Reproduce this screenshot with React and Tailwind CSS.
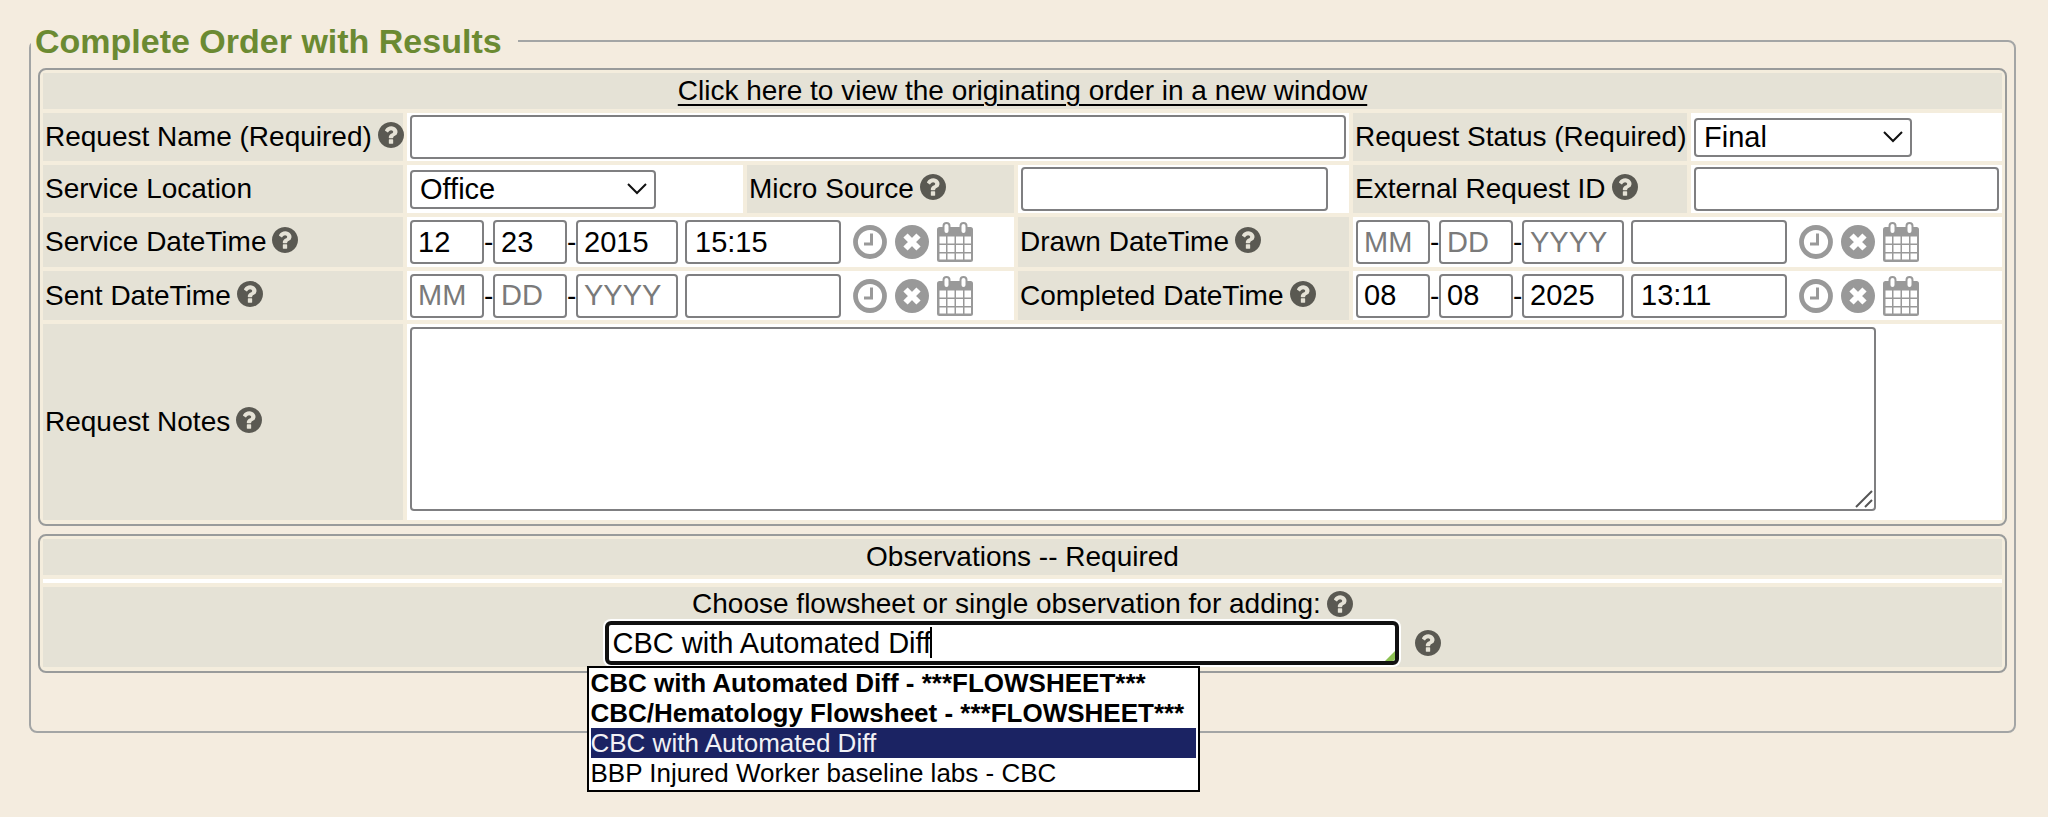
import React from "react";

const BOX =
  "h-[44px] rounded-[4px] border-2 border-[#7f7f81] bg-white text-[29px] leading-[36px] text-black outline-none placeholder:text-[#7a7a7a]";
const INPUT = `${BOX} px-1.5`;

function Help({ about, className = "" }) {
  return (
    <button type="button" aria-label={`Help: ${about}`} className={`inline-flex shrink-0 ${className}`}>
      <svg viewBox="0 0 1536 1536" className="size-[26px]" fill="#5a5952" aria-hidden="true">
        <path d="M896 1248v-192q0-14-9-23t-23-9H672q-14 0-23 9t-9 23v192q0 14 9 23t23 9h192q14 0 23-9t9-23zm256-672q0-88-55.500-163T958 297t-170-41q-243 0-371 213-15 24 8 42l132 100q7 6 19 6 16 0 25-12 53-68 86-92 34-24 86-24 48 0 85.500 26t37.500 59q0 38-20 61t-68 45q-63 28-115.500 86.500T640 892v36q0 14 9 23t23 9h192q14 0 23-9t9-23q0-19 21.500-49.500T972 829q32-18 49-28.500t46-35 44.500-48 28-60.500 12.500-81zm384 192q0 209-103 385.500T1153.500 1433 768 1536t-385.500-103T103 1153.500 0 768t103-385.500T382.500 103 768 0t385.500 103T1433 382.500 1536 768z" />
      </svg>
    </button>
  );
}

function LabelCell({ children, htmlFor, help, className = "" }) {
  return (
    <div className={`flex items-center gap-1.5 bg-[#e5e2d6] px-[2px] ${className}`}>
      <label htmlFor={htmlFor} className="whitespace-nowrap">
        {children}
      </label>
      {help && <Help about={children} className="-mt-1" />}
    </div>
  );
}

function FieldCell({ children, className = "" }) {
  return <div className={`flex items-center bg-white px-[3px] ${className}`}>{children}</div>;
}

function Select({ id, value, options, className = "" }) {
  return (
    <div className={`relative ${className}`}>
      <select
        id={id}
        defaultValue={value}
        className="block h-[39px] w-full appearance-none rounded-[4px] border-2 border-[#7f7f81] bg-white pr-10 pl-2 text-[29px] leading-[34px] text-black"
      >
        {options.map((o) => (
          <option key={o}>{o}</option>
        ))}
      </select>
      <svg
        viewBox="0 0 20 12"
        className="pointer-events-none absolute top-[13px] right-[9px] h-3 w-5"
        fill="none"
        stroke="#111"
        strokeWidth="2"
        aria-hidden="true"
      >
        <path d="M1 1l9 9 9-9" />
      </svg>
    </div>
  );
}

function ClockIcon() {
  return (
    <svg viewBox="0 0 34 34" className="size-[34px]" fill="none" stroke="#999" aria-hidden="true">
      <circle cx="17" cy="17" r="14.500" strokeWidth="4.800" />
      <path d="M18.500 8.500v10.500H11" strokeWidth="3" />
    </svg>
  );
}

function ClearIcon() {
  return (
    <svg viewBox="0 0 34 34" className="size-[34px]" aria-hidden="true">
      <circle cx="17" cy="17" r="17" fill="#999" />
      <path d="M10.500 10.500l13 13M23.500 10.500l-13 13" stroke="#fff" strokeWidth="6" />
    </svg>
  );
}

function CalendarIcon() {
  return (
    <svg viewBox="0 0 36 40" className="h-10 w-9" aria-hidden="true">
      <rect x="0" y="5" width="36" height="35" rx="2.500" fill="#999" />
      <g fill="#fff">
        {[14.5, 23, 31.5].map((y) =>
          [2.5, 10.5, 19, 27.5].map((x) => (
            <rect key={`${x}-${y}`} x={x} y={y} width={x === 2.5 || x === 27.5 ? 6.5 : 7} height={y === 31.5 ? 6 : 7} />
          ))
        )}
      </g>
      <rect x="6.500" y="1" width="6" height="11" rx="3" fill="#fff" stroke="#999" strokeWidth="2" />
      <rect x="23.500" y="1" width="6" height="11" rx="3" fill="#fff" stroke="#999" strokeWidth="2" />
    </svg>
  );
}

function DateTimeFields({ id, name, month, day, year, time }) {
  return (
    <div className="flex items-center">
      <input id={id} placeholder="MM" defaultValue={month} className={`${INPUT} w-[74px]`} />
      <span className="w-[9px] text-center">-</span>
      <input aria-label={`${name} day`} placeholder="DD" defaultValue={day} className={`${INPUT} w-[74px]`} />
      <span className="w-[9px] text-center">-</span>
      <input aria-label={`${name} year`} placeholder="YYYY" defaultValue={year} className={`${INPUT} w-[102px]`} />
      <input aria-label={`${name} time`} defaultValue={time} className={`${BOX} ml-[7px] w-[156px] px-2`} />
      <div className="ml-3 flex items-center gap-2">
        <button type="button" aria-label={`Set ${name} to now`}>
          <ClockIcon />
        </button>
        <button type="button" aria-label={`Clear ${name}`}>
          <ClearIcon />
        </button>
        <button type="button" aria-label={`Pick ${name} from calendar`}>
          <CalendarIcon />
        </button>
      </div>
    </div>
  );
}

const SUGGESTIONS = [
  { text: "CBC with Automated Diff - ***FLOWSHEET***", bold: true },
  { text: "CBC/Hematology Flowsheet - ***FLOWSHEET***", bold: true },
  { text: "CBC with Automated Diff", selected: true },
  { text: "BBP Injured Worker baseline labs - CBC" },
];

export default function App() {
  return (
    <main className="min-h-screen bg-[#f4ecdf] pt-[19px] pr-8 pb-14 pl-[29px] font-['Liberation_Sans',Arial,sans-serif] text-[28px] leading-[34px] text-black">
      <fieldset className="rounded-[8px] border-2 border-[#a3a5a5] px-[7px] pb-[58px]">
        <legend className="-ml-[7px] pr-4 pl-1 text-[34px] leading-[44px] font-bold text-[#6b8a32]">
          Complete Order with Results
        </legend>

        <section className="mt-[5px] grid grid-cols-[360px_336fr_267fr_331fr_334px_311fr] gap-1 rounded-[8px] border-2 border-[#999b9b] bg-[#f4eddd] p-[3px] pb-1">
          <div className="col-span-full flex h-9 items-center justify-center bg-[#e5e2d6]">
            <a href="#order" className="underline decoration-2 underline-offset-[4px]">
              Click here to view the originating order in a new window
            </a>
          </div>

          <LabelCell htmlFor="name" help className="h-12">Request Name (Required)</LabelCell>
          <FieldCell className="col-span-3">
            <input id="name" className={`${INPUT} w-full`} />
          </FieldCell>
          <LabelCell htmlFor="status">Request Status (Required)</LabelCell>
          <FieldCell>
            <Select id="status" value="Final" options={["Final", "Preliminary"]} className="w-[218px]" />
          </FieldCell>

          <LabelCell htmlFor="location" className="h-12">Service Location</LabelCell>
          <FieldCell>
            <Select id="location" value="Office" options={["Office", "Hospital"]} className="w-[246px]" />
          </FieldCell>
          <LabelCell htmlFor="micro" help>Micro Source</LabelCell>
          <FieldCell>
            <input id="micro" className={`${INPUT} w-[307px]`} />
          </FieldCell>
          <LabelCell htmlFor="external" help>External Request ID</LabelCell>
          <FieldCell>
            <input id="external" className={`${INPUT} w-full`} />
          </FieldCell>

          <LabelCell htmlFor="service" help className="h-[50px]">Service DateTime</LabelCell>
          <FieldCell className="col-span-2">
            <DateTimeFields id="service" name="Service DateTime" month="12" day="23" year="2015" time="15:15" />
          </FieldCell>
          <LabelCell htmlFor="drawn" help>Drawn DateTime</LabelCell>
          <FieldCell className="col-span-2">
            <DateTimeFields id="drawn" name="Drawn DateTime" />
          </FieldCell>

          <LabelCell htmlFor="sent" help className="h-[49px]">Sent DateTime</LabelCell>
          <FieldCell className="col-span-2">
            <DateTimeFields id="sent" name="Sent DateTime" />
          </FieldCell>
          <LabelCell htmlFor="completed" help>Completed DateTime</LabelCell>
          <FieldCell className="col-span-2">
            <DateTimeFields id="completed" name="Completed DateTime" month="08" day="08" year="2025" time="13:11" />
          </FieldCell>

          <LabelCell htmlFor="notes" help>Request Notes</LabelCell>
          <FieldCell className="col-span-5 pt-[3px] pb-[9px]">
            <div className="relative w-[1466px] max-w-full">
              <textarea
                id="notes"
                className="block h-[184px] w-full resize-none rounded-[4px] border-2 border-[#7f7f81] bg-white px-2 text-[29px] outline-none"
              />
              <svg
                viewBox="0 0 18 18"
                className="pointer-events-none absolute right-[3px] bottom-[3px] size-[18px]"
                stroke="#555"
                strokeWidth="2"
                aria-hidden="true"
              >
                <path d="M1 17L17 1M10 17l7-7" />
              </svg>
            </div>
          </FieldCell>
        </section>

        <section className="mt-2 flex flex-col gap-1 rounded-[8px] border-2 border-[#999b9b] bg-[#f4eddd] p-[3px] pb-1">
          <h2 className="flex h-9 items-center justify-center bg-[#e5e2d6]">Observations -- Required</h2>
          <div className="h-1 bg-white" />
          <div className="flex h-20 flex-col items-center bg-[#e5e2d6]">
            <div className="flex items-center gap-1.5">
              <label htmlFor="observation">Choose flowsheet or single observation for adding:</label>
              <Help about="Choose flowsheet" />
            </div>
            <div className="relative flex items-center gap-4">
              <div className="relative">
                <input
                  id="observation"
                  defaultValue="CBC with Automated Diff"
                  className="block h-[44px] w-[794px] rounded-[6px] border-4 border-[#111] bg-white px-1 text-[29px] leading-[34px] text-black ring-2 ring-white outline-none"
                />
                <span className="pointer-events-none absolute top-[6px] left-[325px] h-[31px] w-[2px] bg-black" aria-hidden="true" />
                <svg viewBox="0 0 10 10" className="pointer-events-none absolute right-1 bottom-1 size-[10px]" fill="#8cc152" aria-hidden="true">
                  <path d="M10 0v7q0 3-3 3H0z" />
                </svg>
              </div>
              <Help about="observation search" />
              <ul role="listbox" aria-label="Matching observations" className="absolute top-[45px] -left-[18px] z-10 w-[613px] border-2 border-black bg-white px-[2px] pb-[2px]">
                {SUGGESTIONS.map((s) => (
                  <li
                    key={s.text}
                    role="option"
                    aria-selected={Boolean(s.selected)}
                    className={`h-[30px] text-[26px] leading-[30px] whitespace-nowrap ${s.bold ? "font-bold" : ""} ${
                      s.selected ? "bg-[#1b2363] text-[#f1f1f5]" : ""
                    }`}
                  >
                    {s.text}
                  </li>
                ))}
              </ul>
            </div>
          </div>
        </section>
      </fieldset>
    </main>
  );
}
